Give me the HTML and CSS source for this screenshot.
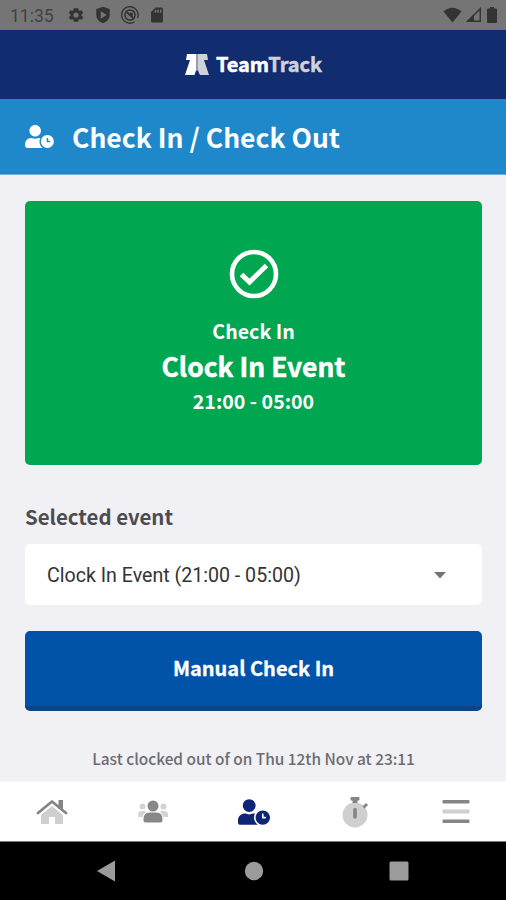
FILE: index.html
```html
<!DOCTYPE html>
<html lang="en">
<head>
<meta charset="utf-8">
<title>TeamTrack</title>
<link rel="stylesheet" href="styles.css">
</head>
<body>
<svg class="defs" width="0" height="0" aria-hidden="true">
  <symbol id="user-clock" viewBox="0 0 640 512">
    <path fill="currentColor" d="M496 224c-79.6 0-144 64.400-144 144s64.400 144 144 144 144-64.400 144-144-64.400-144-144-144zm64 150.300c0 5.300-4.400 9.700-9.700 9.700h-60.600c-5.300 0-9.700-4.400-9.700-9.700v-76.600c0-5.300 4.400-9.700 9.700-9.700h12.600c5.300 0 9.700 4.400 9.700 9.700V352h38.300c5.300 0 9.700 4.400 9.700 9.700v12.600zM320 368c0-27.800 6.700-54.100 18.200-77.500-8-1.500-16.200-2.500-24.600-2.500h-16.700c-22.200 10.200-46.900 16-72.900 16s-50.600-5.800-72.900-16h-16.700C60.200 288 0 348.200 0 422.400V464c0 26.500 21.500 48 48 48h347.100c-45.300-31.900-75.100-84.500-75.100-144zm-96-112c70.700 0 128-57.300 128-128S294.700 0 224 0 96 57.300 96 128s57.300 128 128 128z"/>
  </symbol>
</svg>

<div class="status-bar">
  <span class="clock">11:35</span>
  <div class="status-left">
    <svg width="18" height="18" viewBox="0 0 24 24"><path fill="currentColor" fill-rule="evenodd" d="M19.400 13a7.500 7.500 0 0 0 0-2l2.200-1.600-2.100-3.700-2.500 1a7.500 7.500 0 0 0-1.700-1L15 3H9l-.4 2.700a7.500 7.500 0 0 0-1.700 1l-2.500-1-2.100 3.700L4.600 11a7.500 7.500 0 0 0 0 2l-2.200 1.600 2.100 3.700 2.500-1a7.500 7.500 0 0 0 1.700 1L9 21h6l.4-2.700a7.500 7.500 0 0 0 1.700-1l2.500 1 2.100-3.700zM12 15.500a3.500 3.500 0 1 1 0-7 3.500 3.500 0 0 1 0 7z"/></svg>
    <svg width="18" height="18" viewBox="0 0 24 24"><path fill="currentColor" fill-rule="evenodd" d="M12 1l9 3v8c0 5-3.600 9-9 11-5.400-2-9-6-9-11V4zM9 7v10l8-5z"/></svg>
    <svg width="18" height="18" viewBox="0 0 24 24"><g fill="none" stroke="currentColor"><path stroke-width="1.800" d="M18 21a11 11 0 1 1 4-5"/><circle cx="12" cy="12" r="6.800" stroke-width="2"/><path stroke-width="2.400" d="M7.500 8l9 8"/></g><circle cx="13.500" cy="11" r="2.500" fill="currentColor"/></svg>
    <svg width="18" height="18" viewBox="0 0 24 24"><path fill="currentColor" fill-rule="evenodd" d="M10 2h8a2 2 0 0 1 2 2v16a2 2 0 0 1-2 2H6a2 2 0 0 1-2-2V8zM9 5v4h2V5zm3.500 0v4h2V5zM16 5v4h2V5z"/></svg>
  </div>
  <div class="status-right">
    <svg width="19" height="16" viewBox="0 0 19 16"><path fill="currentColor" d="M.5 4.500Q9.500-3 18.500 4.500L9.500 15.500z"/></svg>
    <svg width="16" height="16" viewBox="0 0 16 16"><path fill="none" stroke="currentColor" stroke-width="1.400" d="M1.700 14.300H14.300V1.700z"/><path fill="currentColor" d="M0 15L8 7v8z"/></svg>
    <svg width="12" height="16" viewBox="0 0 12 16"><path fill="currentColor" d="M4 0h4v1.500h2q1 0 1 1V15q0 1-1 1H2q-1 0-1-1V2.500q0-1 1-1h2z"/></svg>
  </div>
</div>

<header class="brand-bar">
  <svg width="26" height="24" viewBox="0 0 26 24">
    <path fill="#fff" d="M3 1h10v17l-2 4H1L6 7H2z"/>
    <path fill="#d0d2da" d="M13 1h10l1 6h-4l5 15h-9l-3-5z"/>
    <path fill="#989cad" d="M12 1h2v16h-2z"/>
    <path fill="#12296c" d="M12 17.500h2l1.500 4.500h-5z"/>
  </svg>
  <span class="brand">Team<span class="brand-end">Track</span></span>
</header>

<div class="page-title">
  <svg class="title-icon" width="29" height="23"><use href="#user-clock"/></svg>
  <h1>Check In / Check Out</h1>
</div>

<main>
  <section class="check-card">
    <svg width="50" height="50" viewBox="0 0 50 50" fill="none" stroke="#fff"><circle cx="25" cy="25" r="22" stroke-width="4.600"/><path stroke-width="5" d="M12.500 25.500l8 7.500L37.500 16.500"/></svg>
    <p class="card-action">Check In</p>
    <p class="card-event">Clock In Event</p>
    <p class="card-time">21:00 - 05:00</p>
  </section>
  <h2>Selected event</h2>
  <div class="select">
    <span>Clock In Event (21:00 - 05:00)</span>
    <svg width="12" height="7" viewBox="0 0 12 7"><path fill="#737373" d="M0 0h12L6 6.500z"/></svg>
  </div>
  <button class="manual">Manual Check In</button>
  <p class="last">Last clocked out of on Thu 12th Nov at 23:11</p>
</main>

<nav class="tabs">
  <div class="tab"><svg width="32" height="26" viewBox="0 0 32 26"><path fill="#cfcfcf" d="M16 7l11 9v9h-8v-7h-6v7H5v-9z"/><path fill="#858585" d="M22.500 1H27V10h-4.500z"/><path fill="none" stroke="#858585" stroke-width="2.800" stroke-linecap="round" stroke-linejoin="round" d="M2 14L16 2.500 30 14"/></svg></div>
  <div class="tab"><svg width="32" height="26" viewBox="0 0 32 26"><g fill="#d3d3d3"><circle cx="5.500" cy="7.500" r="3"/><circle cx="26.500" cy="7.500" r="3"/><path d="M1 18v-2.500Q1 12 4.500 12H7q1.500 0 2 1-3 2-3.500 5zM31 18v-2.500Q31 12 27.500 12H25q-1.500 0-2 1 3 2 3.500 5z"/></g><g fill="#888"><circle cx="16" cy="7" r="5.500"/><path d="M6.500 21.500V20q0-6.500 6-6.500h7q6 0 6 6.500v1.500q0 2-2 2h-15q-2 0-2-2z"/></g></svg></div>
  <div class="tab active"><svg width="32" height="26"><use href="#user-clock"/></svg></div>
  <div class="tab"><svg width="28" height="32" viewBox="0 0 28 32"><circle cx="14" cy="19" r="12.500" fill="#cfcfcf"/><path fill="#858585" d="M10.500 1h7q1 0 1 1v1.500q0 1-1 1h-1V7h-5V4.500h-1q-1 0-1-1V2q0-1 1-1z"/><path stroke="#858585" stroke-width="3.600" stroke-linecap="round" d="M14 13.500v7.500"/><path stroke="#858585" stroke-width="3" d="M22.500 11.500l3.500-3.500"/></svg></div>
  <div class="tab"><svg width="28" height="26" viewBox="0 0 28 26"><path fill="#858585" d="M1.500 1h25q1 0 1 1v1.500q0 1-1 1h-25q-1 0-1-1V2q0-1 1-1zM1.500 20.500h25q1 0 1 1V23q0 1-1 1h-25q-1 0-1-1v-1.500q0-1 1-1z"/><rect x=".5" y="10.500" width="27" height="4" rx="1" fill="#d0d0d0"/></svg></div>
</nav>

<div class="system-nav">
  <svg width="18" height="22" viewBox="0 0 18 22"><path fill="#9b9b9b" d="M18 .5v21L0 11z"/></svg>
  <svg width="20" height="20" viewBox="0 0 20 20"><circle cx="10" cy="10" r="9.200" fill="#9b9b9b"/></svg>
  <svg width="20" height="20" viewBox="0 0 20 20"><rect x=".5" y=".5" width="19" height="19" rx="1.500" fill="#9b9b9b"/></svg>
</div>
</body>
</html>
```

FILE: styles.css
```css
* { box-sizing: border-box; margin: 0; padding: 0; }
body {
  width: 506px;
  height: 900px;
  display: flex;
  flex-direction: column;
  overflow: hidden;
  background: #f0f0f5;
  font-family: "Noto Sans CJK SC", "Noto Sans", sans-serif;
  font-weight: 700;
}
svg { display: block; flex: none; }
.defs { position: absolute; }

.status-bar {
  height: 30px;
  display: flex;
  align-items: center;
  padding: 0 8px 0 10px;
  background: #757575;
  color: #333;
}
.clock { width: 57px; padding-top: 1px; font: 400 17.5px/28px Roboto, sans-serif; color: #424242; }
.status-left { display: flex; gap: 9px; }
.status-right { display: flex; gap: 4px; margin-left: auto; }

.brand-bar {
  height: 69px;
  display: flex;
  align-items: center;
  justify-content: center;
  gap: 6px;
  background: #122c70;
}
.brand {
  padding-bottom: 1px;
  font-size: 20px;
  line-height: 30px;
  letter-spacing: -0.1px;
  color: #fff;
  -webkit-text-stroke: 0.5px currentColor;
}
.brand-end { color: #cfd2dc; }

.page-title {
  height: 76px;
  display: flex;
  align-items: center;
  padding-left: 25px;
  gap: 18px;
  background: #1e88cb;
  border-bottom: 1px solid #6fb0dc;
  color: #fff;
}
h1 { font-size: 26.5px; line-height: 40px; white-space: nowrap; }

main {
  height: 606px;
  display: flex;
  flex-direction: column;
  padding: 26px 24px 0 25px;
}
.check-card {
  height: 264px;
  display: flex;
  flex-direction: column;
  align-items: center;
  padding-top: 48px;
  border-radius: 5px;
  background: #00a650;
  color: #fff;
}
.card-action { margin-top: 17px; font-size: 19.6px; line-height: 30px; }
.card-event { font-size: 26.4px; line-height: 40px; -webkit-text-stroke: 0.5px currentColor; }
.card-time { font-size: 19.6px; line-height: 30px; }
h2 { margin-top: 36px; font-size: 20.4px; line-height: 30px; color: #4c4c50; }
.select {
  height: 61px;
  margin-top: 13px;
  padding: 2px 36px 0 22px;
  display: flex;
  align-items: center;
  justify-content: space-between;
  border-radius: 5px;
  background: #fff;
  font: 400 19.6px/28px Roboto, sans-serif;
  color: #333;
}
.manual {
  height: 80px;
  margin-top: 26px;
  padding-bottom: 3px;
  border: 0;
  border-bottom: 5px solid #0b4584;
  border-radius: 5px;
  background: #0053a8;
  color: #fff;
  font: inherit;
  font-size: 20px;
  -webkit-text-stroke: 0.3px currentColor;
}
.last { margin-top: 35px; font-size: 15.4px; line-height: 24px; text-align: center; color: #6c6c70; font-weight: 500; }

.tabs {
  height: 61px;
  display: grid;
  grid-template-columns: repeat(5, 1fr);
  padding-left: 1px;
  background: #fff;
  border-top: 1px solid #f8f8fa;
  border-bottom: 1px solid #777;
}
.tab { display: flex; align-items: center; justify-content: center; }
.active { color: #0e2774; }

.system-nav {
  height: 58px;
  display: grid;
  grid-template-columns: 18px 20px 20px;
  justify-content: space-between;
  align-items: center;
  padding: 0 97px;
  background: #000;
}
.system-nav svg:nth-child(2) { margin-left: 1.500px; }
```
